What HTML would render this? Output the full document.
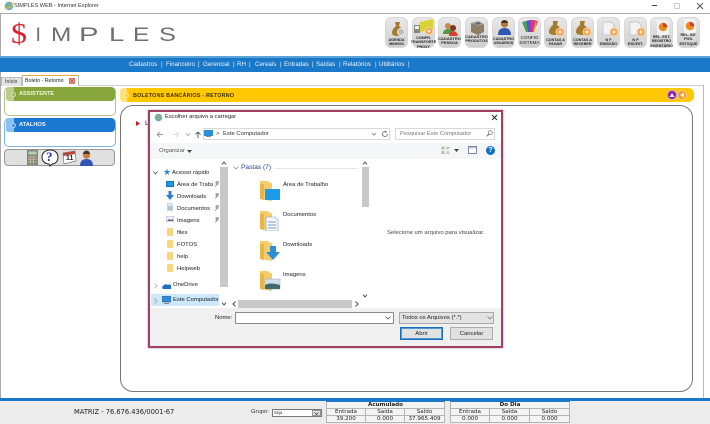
<!DOCTYPE html>
<html><head><meta charset="utf-8">
<style>
html,body{margin:0;padding:0;background:#fff}
body{width:710px;height:424px;position:relative;overflow:hidden;font-family:"Liberation Sans",sans-serif;color:#222;filter:blur(.3px)}
div,span,svg{position:absolute;box-sizing:border-box}
.t{white-space:nowrap}
.b{width:23px;height:31px;top:17px;border-radius:6px;background:linear-gradient(#e8e8e8,#cfcfcf);border:1px solid #d8d8d8}
.l{left:-3px;width:27px;text-align:center;font-size:3.7px;line-height:4.3px;font-weight:bold;color:#222}
.nm{font-size:5.9px;color:#222;white-space:nowrap}
.c{border:1px solid #b4b4b4;background:#f4f4f4;text-align:center;font-size:5.6px;line-height:7px;font-family:"DejaVu Sans",sans-serif;color:#222;white-space:nowrap}
.n{top:60px;font-size:6.2px;line-height:9px;color:#eef5fc;white-space:nowrap}
.g{top:25px;font-size:19.5px;line-height:20px;color:#6f6f6f;transform-origin:left;white-space:nowrap}
.f{width:6px;height:8px;left:167px;background:#f7d67c;border-radius:1px}
</style></head>
<body>
<!-- title bar -->
<svg style="left:4px;top:1px" width="10" height="10" viewBox="0 0 10 10"><circle cx="5" cy="5" r="4.2" fill="#5da7d8"/><path d="M1 5Q5 1 9 4M2 7Q5 4 8 7" stroke="#9ab95a" stroke-width="1.3" fill="none"/><path d="M0 7Q6 9 10 1" stroke="#e8c24d" stroke-width=".8" fill="none"/></svg>
<div class="t" style="left:14px;top:2px;font-size:5.6px;color:#333;line-height:9px">SIMPLES WEB - Internet Explorer</div>
<div style="left:652px;top:5px;width:5px;height:1px;background:#444"></div>
<div style="left:674px;top:3px;width:6px;height:6px;border:1px solid #ccc"></div>
<svg style="left:696px;top:2px" width="8" height="8"><path d="M1 1L7 7M7 1L1 7" stroke="#555" stroke-width="1"/></svg>
<div style="left:0;top:13px;width:710px;height:1px;background:#a8a8a8"></div>
<div style="left:0;top:14px;width:1px;height:384px;background:#aaa"></div>
<!-- logo -->
<div class="t" style="left:11px;top:15px;font-family:'Liberation Serif',serif;font-size:29px;line-height:38px;color:#e01f26;transform:scaleX(1.1);transform-origin:left">$</div>
<div class="g" style="left:35.500px">I</div>
<div class="g" style="left:51px;transform:scaleX(1.25)">M</div>
<div class="g" style="left:79px;transform:scaleX(1.5)">P</div>
<div class="g" style="left:108.500px;transform:scaleX(1.4)">L</div>
<div class="g" style="left:132.500px;transform:scaleX(1.25)">E</div>
<div class="g" style="left:158.500px;transform:scaleX(1.3)">S</div>
<!-- toolbar buttons -->
<div class="b" style="left:385px"><svg style="left:4px;top:3px" width="15" height="16"><path d="M5 1h5l-1 4q5 3 4 8q-1 2-5 2q-6 0-6-3q0-4 4-7z" fill="#a67c2c"/><circle cx="11" cy="11" r="3.5" fill="#bbb" stroke="#eee"/></svg><div class="l" style="top:20px">AGENDA<br>MINHOS</div></div>
<div class="b" style="left:412px"><svg style="left:0;top:1px" width="22" height="18"><path d="M7 3L20 0V11L7 13z" fill="#d9d232"/><path d="M1 6h6v8H1z" fill="#888"/><path d="M2 7h4v3H2z" fill="#eee"/><circle cx="16" cy="12" r="3.6" fill="#f0973a" stroke="#f7d5a8"/><path d="M16 10v4M14 12h4" stroke="#fff"/></svg><div class="l" style="top:18px">COMPR.<br>TRANSPORTE<br>PROXY</div></div>
<div class="b" style="left:438px"><svg style="left:3px;top:4px" width="17" height="14"><circle cx="6" cy="4" r="3" fill="#c68a4f"/><path d="M1 12q0-5 5-5t5 5z" fill="#4d9a3e"/><circle cx="11" cy="6" r="3" fill="#7a3a1a"/><path d="M7 14q0-5 4-5t5 5z" fill="#d9412f"/></svg><div class="l" style="top:19px;font-size:4px">CADASTRO<br>PESSOA</div></div>
<div class="b" style="left:465px"><svg style="left:4px;top:2px" width="15" height="15"><path d="M1 3l7-2 6 3v8l-6 3-7-3z" fill="#8e7c63"/><path d="M1 3l7 3 6-2-6-3z" fill="#b7a88e"/><path d="M5 3l5-1 1 2-5 1z" fill="#4b6a9c"/></svg><div class="l" style="top:17px;font-size:4px">CADASTRO<br>PRODUTOS</div></div>
<div class="b" style="left:492px"><svg style="left:5px;top:2px" width="13" height="15"><circle cx="6.500" cy="4" r="3.500" fill="#b87333"/><path d="M3 3a3.500 3 0 0 1 7 0z" fill="#4b3423"/><path d="M0 15q0-7 6.500-7T13 15z" fill="#2f56b5"/></svg><div class="l" style="top:19px">CADASTRO<br>USUÁRIOS</div></div>
<div class="b" style="left:518px"><svg style="left:2px;top:1px" width="19" height="16"><path d="M1 3L5 13h2L5 2z" fill="#4aa34a"/><path d="M5 2l2 11h2L9 1z" fill="#3e5fd0"/><path d="M9 1v12h2l1-12z" fill="#c02fb0"/><path d="M12 1l-1 12h2l4-11z" fill="#e03a5c"/><path d="M15 3l-2 10" stroke="#eecc44" stroke-width="1"/></svg><div class="l" style="top:17px;font-size:4.600px;line-height:5.400px;font-weight:normal">CONFIG<br>SISTEMA</div></div>
<div class="b" style="left:544px"><svg style="left:3px;top:2px" width="17" height="17"><path d="M5 1h5l-1 4q5 3 4 8q-1 2-5 2q-7 0-7-3q0-4 4-7z" fill="#a67c2c"/><circle cx="12" cy="12" r="4" fill="#f0973a" stroke="#f7d5a8"/><path d="M12 9.500v5M9.500 12h5" stroke="#fff"/></svg><div class="l" style="top:20px">CONTAS A<br>PAGAR</div></div>
<div class="b" style="left:571px"><svg style="left:3px;top:2px" width="17" height="17"><path d="M5 1h5l-1 4q5 3 4 8q-1 2-5 2q-7 0-7-3q0-4 4-7z" fill="#a67c2c"/><circle cx="12" cy="12" r="4" fill="#f0973a" stroke="#f7d5a8"/><path d="M12 9.500v5M9.500 12h5" stroke="#fff"/></svg><div class="l" style="top:20px">CONTAS A<br>RECEBER</div></div>
<div class="b" style="left:597px"><svg style="left:4px;top:3px" width="17" height="16"><path d="M1 1h8l3 3v10H1z" fill="#f4f4f4" stroke="#bbb" stroke-width=".7"/><circle cx="12" cy="11" r="4" fill="#f0973a" stroke="#f7d5a8"/><path d="M12 8.500v5M9.500 11h5" stroke="#fff"/></svg><div class="l" style="top:20px">N F<br>EMISSÃO</div></div>
<div class="b" style="left:624px"><svg style="left:4px;top:3px" width="17" height="16"><path d="M1 1h8l3 3v10H1z" fill="#f4f4f4" stroke="#bbb" stroke-width=".7"/><circle cx="12" cy="11" r="4" fill="#f0973a" stroke="#f7d5a8"/><path d="M12 8.500v5M9.500 11h5" stroke="#fff"/></svg><div class="l" style="top:20px;font-size:4px">N F<br>ESCRIT.</div></div>
<div class="b" style="left:650px"><svg style="left:5px;top:2px" width="14" height="15"><path d="M1 0h9l3 3v12H1z" fill="#f2f2f2"/><circle cx="7" cy="7" r="4.200" fill="#ea8a1e"/><path d="M7 7V2.800A4.200 4.200 0 0 1 11.200 7z" fill="#d83a22"/></svg><div class="l" style="top:17px">REL. EST.<br>REGISTRO<br>INVENTÁRIO</div></div>
<div class="b" style="left:677px"><svg style="left:5px;top:1px" width="14" height="15"><path d="M1 0h9l3 3v12H1z" fill="#f2f2f2"/><circle cx="7" cy="7" r="4.200" fill="#ea8a1e"/><path d="M7 7V2.800A4.200 4.200 0 0 1 11.200 7z" fill="#d83a22"/></svg><div class="l" style="top:15px">REL. INT.<br>POS.<br>ESTOQUE</div></div>
<!-- blue nav -->
<div style="left:0;top:56px;width:710px;height:16px;background:linear-gradient(#5ba3d8 0,#5ba3d8 2px,#1a78c8 2px,#1a78c8 100%)"></div>
<div class="n" style="left:129px">Cadastros</div><div class="n" style="left:161px">|</div>
<div class="n" style="left:166px">Financeiro</div><div class="n" style="left:198px">|</div>
<div class="n" style="left:203px">Gerencial</div><div class="n" style="left:233px">|</div>
<div class="n" style="left:237px">RH</div><div class="n" style="left:249px">|</div>
<div class="n" style="left:255px">Cereais</div><div class="n" style="left:280px">|</div>
<div class="n" style="left:284px">Entradas</div><div class="n" style="left:312px">|</div>
<div class="n" style="left:316px">Saídas</div><div class="n" style="left:339px">|</div>
<div class="n" style="left:343px">Relatórios</div><div class="n" style="left:375px">|</div>
<div class="n" style="left:379px">Utilitários</div><div class="n" style="left:408px">|</div>
<!-- tabs -->
<div style="left:1px;top:77px;width:21px;height:9px;background:#e4e4e4;border:1px solid #bbb;border-bottom:0"></div>
<div class="t" style="left:5px;top:78px;font-size:5.200px;line-height:8px;color:#333">Início</div>
<div style="left:22px;top:75px;width:57px;height:11px;background:#fff;border:1px solid #bbb;border-top:1px solid #e6a93a;border-bottom:0"></div>
<div class="t" style="left:25px;top:76.500px;font-size:5.300px;line-height:8px;color:#222">Boleto - Retorno</div>
<div style="left:69px;top:78px;width:6px;height:6px;background:#eebbaa;border:1px solid #d07a60"></div>
<svg style="left:70px;top:79px" width="4" height="4"><path d="M0 0L4 4M4 0L0 4" stroke="#c44" stroke-width=".9"/></svg>
<div style="left:79px;top:85px;width:625px;height:1px;background:#cfcfcf"></div>
<!-- left panels -->
<div style="left:4px;top:87px;width:112px;height:29px;border:1px solid #b3c08e;border-radius:5px;background:#fff"></div>
<div style="left:6px;top:87px;width:109px;height:14px;background:#86a63c;border-radius:3px 4px 4px 3px"></div>
<div style="left:6px;top:87px;width:8px;height:14px;background:#bccb8e;border-radius:3px 0 0 3px"></div>
<div style="left:11px;top:92px;width:5px;height:5px;border-radius:50%;border:1px solid #d7e0b6;background:#9db561"></div>
<div class="t" style="left:19px;top:90px;font-size:5.600px;font-weight:bold;line-height:8px;color:#f1f4e2">ASSISTENTE</div>
<div style="left:4px;top:118px;width:112px;height:29px;border:1px solid #7fb4e2;border-radius:5px;background:#fff"></div>
<div style="left:6px;top:118px;width:109px;height:14px;background:#1a78d0;border-radius:3px 4px 4px 3px"></div>
<div style="left:6px;top:118px;width:8px;height:14px;background:#8cc0ee;border-radius:3px 0 0 3px"></div>
<div style="left:11px;top:123px;width:5px;height:5px;border-radius:50%;border:1px solid #b7d6f2;background:#3f90d8"></div>
<div class="t" style="left:19px;top:121px;font-size:5.700px;font-weight:bold;line-height:8px;color:#eaf3fb">ATALHOS</div>
<div style="left:4px;top:149px;width:111px;height:17px;background:#e0e0e0;border:1px solid #999;border-radius:4px"></div>
<svg style="left:27px;top:150px" width="11" height="15"><rect width="11" height="15" fill="#7c8a76"/><rect x="1.500" y="1.500" width="8" height="3" fill="#b9d0b4"/><path d="M1 7h9M1 9.500h9M1 12h9M3.500 6v8M6.500 6v8" stroke="#d8b8a0" stroke-width=".8"/></svg>
<svg style="left:41px;top:149px" width="18" height="18"><path d="M9 1c4.500 0 8 2.500 8 7s-3 7-6 7l-2 2-1-2c-4 0-7-3-7-7s3.500-7 8-7z" fill="#fff" stroke="#222" stroke-width="1"/></svg>
<div class="t" style="left:46px;top:150px;font-family:'Liberation Serif',serif;font-size:13px;font-weight:bold;line-height:14px;color:#1c2ea8">?</div>
<svg style="left:62px;top:150px" width="15" height="15"><path d="M1 3l12-2 1 10-12 3z" fill="#fff" stroke="#777" stroke-width=".7"/><path d="M1 3l12-2 .4 3-12 2z" fill="#b84a3c"/></svg>
<div class="t" style="left:66px;top:155px;font-size:7px;font-weight:bold;line-height:8px;color:#222">11</div>
<svg style="left:80px;top:150px" width="13" height="16"><circle cx="6.500" cy="5" r="3.700" fill="#c8803c"/><path d="M3 4a3.500 3.500 0 0 1 7 0z" fill="#4b3423"/><path d="M0 16q0-7 6.500-7T13 16z" fill="#2f56b5"/></svg>
<!-- main panel -->
<div style="left:703px;top:85px;width:1px;height:313px;background:#bbb"></div>
<div style="left:120px;top:88px;width:574px;height:14px;background:#ffc800;border-radius:4px 6px 6px 4px"></div>
<div style="left:120px;top:88px;width:7px;height:14px;background:#ffe27a;border-radius:4px 0 0 4px"></div>
<div style="left:124px;top:93px;width:5px;height:5px;border-radius:50%;border:1px solid #ffe98f;background:#ffd030"></div>
<div class="t" style="left:133px;top:92px;font-size:5.400px;font-weight:bold;line-height:8px;color:#3c3000;letter-spacing:.2px">BOLETONS BANCÁRIOS - RETORNO</div>
<div style="left:667px;top:90px;width:10px;height:10px;border-radius:50%;background:#8a1fa8;border:1px solid #c9a4d8"></div>
<svg style="left:669px;top:92px" width="6" height="6"><path d="M3 1L5.500 5H.5z" fill="#fff"/></svg>
<div style="left:677px;top:90px;width:10px;height:10px;border-radius:50%;background:#ef9a32;border:1px solid #f4c88e"></div>
<svg style="left:679px;top:92px" width="6" height="6"><path d="M1 3L5 .5V5.500z" fill="#fff"/></svg>
<div style="left:120px;top:105px;width:573px;height:287px;border:1px solid #777;border-radius:13px;background:#fff"></div>
<svg style="left:136px;top:121px" width="4" height="5"><path d="M0 0L4 2.500 0 5z" fill="#d01818"/></svg>
<div class="t" style="left:145px;top:119px;font-size:6.600px;line-height:9px;color:#222">L</div>
<!-- dialog -->
<div style="left:148px;top:110px;width:355px;height:238px;background:#fff;border:2px solid #a23f66;box-shadow:0 0 2px rgba(0,0,0,.4)"></div>
<svg style="left:154px;top:113px" width="9" height="9" viewBox="0 0 10 10"><circle cx="5" cy="5" r="4.200" fill="#5da7d8"/><path d="M1 5Q5 1 9 4M2 7Q5 4 8 7" stroke="#9ab95a" stroke-width="1.300" fill="none"/></svg>
<div class="t" style="left:165px;top:113px;font-size:5.800px;line-height:9px;color:#222">Escolher arquivo a carregar</div>
<svg style="left:491px;top:114px" width="7" height="7"><path d="M1 1L6 6M6 1L1 6" stroke="#222" stroke-width=".9"/></svg>
<!-- nav row -->
<svg style="left:155px;top:130px" width="48" height="9"><path d="M2 4.500h6M2 4.500L5 2M2 4.500L5 7" stroke="#999" fill="none" stroke-width=".9"/><path d="M24 4.500h-6M24 4.500L21 2M24 4.500L21 7" stroke="#ddd" fill="none" stroke-width=".9"/><path d="M31 3.500L33 5.500 35 3.500" stroke="#999" fill="none" stroke-width=".8"/><path d="M43 8V2M43 2L40.500 4.500M43 2L45.500 4.500" stroke="#555" fill="none" stroke-width=".9"/></svg>
<div style="left:203px;top:128px;width:187px;height:12px;border:1px solid #d9d9d9;background:#fff"></div>
<svg style="left:204px;top:130px" width="10" height="8"><rect width="9" height="6" fill="#2b8ed8"/><rect x="2" y="6" width="5" height="1" fill="#888"/></svg>
<div class="t" style="left:216px;top:130px;font-size:5.900px;line-height:8px;color:#333">&gt;</div>
<div class="t" style="left:223px;top:130px;font-size:5.900px;line-height:8px;color:#333">Este Computador</div>
<svg style="left:371px;top:132px" width="6" height="5"><path d="M1 1L3 3 5 1" stroke="#777" fill="none" stroke-width=".8"/></svg>
<svg style="left:381px;top:130px" width="8" height="8"><path d="M6.500 4A2.500 2.500 0 1 1 5 1.700" stroke="#666" fill="none" stroke-width=".8"/><path d="M4 .5L6 1.700 4.500 3.200" fill="#666"/></svg>
<div style="left:395px;top:128px;width:100px;height:12px;border:1px solid #d9d9d9;background:#fff"></div>
<div class="t" style="left:400px;top:130px;font-size:5.700px;line-height:8px;color:#777">Pesquisar Este Computador</div>
<svg style="left:486px;top:130px" width="7" height="7"><circle cx="4.300" cy="2.700" r="2" stroke="#666" fill="none" stroke-width=".7"/><path d="M3 4L.8 6.300" stroke="#666"/></svg>
<!-- toolbar -->
<div style="left:150px;top:143px;width:351px;height:16px;background:#f5f6f7"></div>
<div class="nm" style="left:159px;top:147px;line-height:8px;color:#555">Organizar</div>
<svg style="left:187px;top:150px" width="5" height="3"><path d="M0 0h5L2.500 3z" fill="#444"/></svg>
<svg style="left:441px;top:146px" width="9" height="9"><rect x=".5" y=".5" width="3" height="3" fill="#a8c8a0"/><rect x=".5" y="5" width="3" height="3" fill="#c8b8a0"/><path d="M5 1.500h4M5 3h3M5 6h4M5 7.500h3" stroke="#aaa" stroke-width=".7"/></svg>
<svg style="left:454px;top:149px" width="5" height="3"><path d="M0 0h5L2.500 3z" fill="#444"/></svg>
<svg style="left:468px;top:146px" width="9" height="8"><rect x=".5" y=".5" width="8" height="7" fill="#fff" stroke="#7a8a9a"/><rect x="1" y="1" width="7" height="1.500" fill="#bcd"/></svg>
<div class="t" style="left:486px;top:146px;width:9px;height:9px;border-radius:50%;background:#1270c4;color:#fff;font-size:7px;font-weight:bold;line-height:9px;text-align:center">?</div>
<!-- nav tree -->
<div style="left:220px;top:167px;width:8px;height:120px;background:#c8c8c8"></div>
<svg style="left:221px;top:161px" width="6" height="4"><path d="M1 3.500L3 1 5 3.500" stroke="#444" fill="none" stroke-width=".9"/></svg>
<svg style="left:221px;top:302px" width="6" height="4"><path d="M1 .5L3 3 5 .5" stroke="#444" fill="none" stroke-width=".9"/></svg>
<svg style="left:153px;top:171px" width="5" height="4"><path d="M.5 .5L2.500 3 4.500 .5" stroke="#555" fill="none" stroke-width=".8"/></svg>
<div class="t" style="left:163px;top:167px;font-size:9px;line-height:10px;color:#2f7fd0">★</div>
<div class="nm" style="left:172px;top:168.500px;line-height:8px">Acesso rápido</div>
<div style="left:166px;top:181px;width:8px;height:6px;background:#1c9ce8;border:1px solid #1570b0"></div>
<div class="nm" style="left:177px;top:180.500px;line-height:8px;width:36px;overflow:hidden">Área de Trabz</div>
<svg style="left:166px;top:191px" width="8" height="9"><path d="M2.500 0h3v4H8L4 9 0 4h2.500z" fill="#2b7fd6"/></svg>
<div class="nm" style="left:177px;top:192.500px;line-height:8px">Downloads</div>
<svg style="left:167px;top:203px" width="6" height="8"><path d="M0 0h4l2 2v6H0z" fill="#dfe8f2" stroke="#8aa" stroke-width=".5"/><path d="M1 4h4M1 6h4" stroke="#58a" stroke-width=".7"/></svg>
<div class="nm" style="left:177px;top:204.500px;line-height:8px">Documentos</div>
<svg style="left:166px;top:216px" width="8" height="6"><rect width="8" height="6" fill="#eef" stroke="#889" stroke-width=".5"/><path d="M1 5l2-2 2 1 2-1v2z" fill="#567"/></svg>
<div class="nm" style="left:177px;top:216.500px;line-height:8px">Imagens</div>
<svg style="left:214px;top:181px" width="5" height="6"><path d="M2 0.500h2.500L4 3.500h-2zM3 3.500L1 5.800" stroke="#888" fill="#aaa" stroke-width=".6"/></svg>
<svg style="left:214px;top:193px" width="5" height="6"><path d="M2 0.500h2.500L4 3.500h-2zM3 3.500L1 5.800" stroke="#888" fill="#aaa" stroke-width=".6"/></svg>
<svg style="left:214px;top:205px" width="5" height="6"><path d="M2 0.500h2.500L4 3.500h-2zM3 3.500L1 5.800" stroke="#888" fill="#aaa" stroke-width=".6"/></svg>
<svg style="left:214px;top:217px" width="5" height="6"><path d="M2 0.500h2.500L4 3.500h-2zM3 3.500L1 5.800" stroke="#888" fill="#aaa" stroke-width=".6"/></svg>
<div class="f" style="top:228px"></div>
<div class="nm" style="left:177px;top:228.500px;line-height:8px">files</div>
<div class="f" style="top:240px"></div>
<div class="nm" style="left:177px;top:240.500px;line-height:8px">FOTOS</div>
<div class="f" style="top:252px"></div>
<div class="nm" style="left:177px;top:252.500px;line-height:8px">help</div>
<div class="f" style="top:264px"></div>
<div class="nm" style="left:177px;top:264.500px;line-height:8px">Helpweb</div>
<svg style="left:154px;top:283px" width="4" height="6"><path d="M.5 .5L3 3 .5 5.500" stroke="#aaa" fill="none" stroke-width=".8"/></svg>
<svg style="left:162px;top:283px" width="9" height="6"><path d="M1 6a2 2 0 0 1 .5-3.500A3 3 0 0 1 6 2a2 2 0 0 1 3 4z" fill="#1c6fc4"/></svg>
<div class="nm" style="left:173px;top:280.500px;line-height:8px">OneDrive</div>
<div style="left:151px;top:294px;width:68px;height:12px;background:#cce8fb"></div>
<svg style="left:154px;top:298px" width="4" height="6"><path d="M.5 .5L3 3 .5 5.500" stroke="#999" fill="none" stroke-width=".8"/></svg>
<svg style="left:162px;top:296px" width="9" height="9"><rect width="9" height="6" fill="#2b8ed8" stroke="#446" stroke-width=".5"/><rect x="2" y="7" width="5" height="1" fill="#888"/></svg>
<div class="nm" style="left:173px;top:296px;line-height:8px">Este Computador</div>
<!-- content -->
<svg style="left:233px;top:166px" width="6" height="4"><path d="M.5 .5L3 3 5.500 .5" stroke="#99a" fill="none" stroke-width=".8"/></svg>
<div class="t" style="left:241px;top:163px;font-size:6.600px;line-height:10px;color:#1e3f8f">Pastas (7)</div>
<div style="left:274px;top:168px;width:84px;height:1px;background:#e3e6ec"></div>
<svg style="left:260px;top:180px" width="21" height="21"><path d="M0 1h8l2 2h2v18L0 19z" fill="#f4cd6a"/><path d="M0 4L4 4V20L0 19z" fill="#e7b64a"/><rect x="5" y="9" width="15" height="11" fill="#1c9ce8"/></svg>
<div class="nm" style="left:283px;top:181px;line-height:8px">Área de Trabalho</div>
<svg style="left:260px;top:210px" width="21" height="21"><path d="M0 1h8l2 2h2v18L0 19z" fill="#f4cd6a"/><path d="M0 4L4 4V20L0 19z" fill="#e7b64a"/><path d="M6 7h9l3 3v11H6z" fill="#f3f6fa" stroke="#8a9cac" stroke-width=".6"/><path d="M8 12h8M8 15h8M8 18h8" stroke="#5888b8" stroke-width=".8"/></svg>
<div class="nm" style="left:283px;top:211px;line-height:8px">Documentos</div>
<svg style="left:260px;top:240px" width="21" height="21"><path d="M0 1h8l2 2h2v18L0 19z" fill="#f4cd6a"/><path d="M0 4L4 4V20L0 19z" fill="#e7b64a"/><path d="M10 6h6v6h4l-7 8-7-8h4z" fill="#2b8ed8"/></svg>
<div class="nm" style="left:283px;top:241px;line-height:8px">Downloads</div>
<svg style="left:260px;top:270px" width="21" height="21"><path d="M0 1h8l2 2h2v18L0 19z" fill="#f4cd6a"/><path d="M0 4L4 4V20L0 19z" fill="#e7b64a"/><rect x="5" y="9" width="15" height="10" fill="#cfe0ee" stroke="#9ab" stroke-width=".5"/><path d="M5 15q5-3 15 0v4H5z" fill="#3f6b6a"/></svg>
<div class="nm" style="left:283px;top:271px;line-height:8px">Imagens</div>
<!-- content scrollbars -->
<div style="left:362px;top:167px;width:7px;height:40px;background:#c8c8c8"></div>
<svg style="left:362px;top:161px" width="6" height="4"><path d="M1 3.500L3 1 5 3.500" stroke="#444" fill="none" stroke-width=".9"/></svg>
<svg style="left:362px;top:294px" width="6" height="4"><path d="M1 .5L3 3 5 .5" stroke="#444" fill="none" stroke-width=".9"/></svg>
<div style="left:238px;top:300px;width:114px;height:8px;background:#c9c9c9"></div>
<svg style="left:232px;top:301px" width="4" height="6"><path d="M3.500 .5L1 3 3.500 5.500" stroke="#444" fill="none" stroke-width=".9"/></svg>
<svg style="left:355px;top:301px" width="4" height="6"><path d="M.5 .5L3 3 .5 5.500" stroke="#444" fill="none" stroke-width=".9"/></svg>
<div class="t" style="left:387px;top:229px;font-size:5.900px;line-height:8px;color:#444">Selecione um arquivo para visualizar.</div>
<!-- bottom -->
<div style="left:150px;top:308px;width:351px;height:38px;background:#f0f0f0"></div>
<div class="nm" style="left:215px;top:314px;line-height:8px">Nome:</div>
<div style="left:235px;top:312px;width:159px;height:12px;background:#fff;border:1px solid #8a8a8a;border-radius:1px"></div>
<svg style="left:385px;top:316px" width="6" height="4"><path d="M.5 .5L3 3 5.500 .5" stroke="#555" fill="none" stroke-width=".8"/></svg>
<div style="left:399px;top:312px;width:95px;height:12px;background:#e3e3e3;border:1px solid #ababab"></div>
<div class="nm" style="left:402px;top:314px;line-height:8px">Todos os Arquivos (*.*)</div>
<svg style="left:487px;top:316px" width="6" height="4"><path d="M.5 .5L3 3 5.500 .5" stroke="#777" fill="none" stroke-width=".8"/></svg>
<div style="left:400px;top:327px;width:43px;height:13px;background:#e1e1e1;border:1px solid #1b6fb8;box-shadow:inset 0 0 0 1px #4c9ad8"></div>
<div class="nm" style="left:400px;top:329.500px;width:43px;text-align:center;line-height:8px">Abrir</div>
<div style="left:450px;top:327px;width:43px;height:13px;background:#e1e1e1;border:1px solid #adadad"></div>
<div class="nm" style="left:450px;top:329.500px;width:43px;text-align:center;line-height:8px">Cancelar</div>
<!-- footer -->
<div style="left:0;top:398px;width:710px;height:3px;background:#1a78c8"></div>
<div style="left:0;top:401px;width:710px;height:23px;background:#ececec"></div>
<div class="t" style="left:74px;top:408px;font-family:'DejaVu Sans',sans-serif;font-size:6.700px;line-height:9px;color:#222">MATRIZ - 76.676.436/0001-67</div>
<div class="t" style="left:251px;top:408px;font-size:5.800px;line-height:8px;color:#333">Grupo:</div>
<div style="left:272px;top:409px;width:50px;height:8px;background:#fff;border:1px solid #777"></div>
<div class="t" style="left:274px;top:410px;font-size:4.200px;line-height:6px;color:#333">Seja</div>
<div style="left:312px;top:410px;width:9px;height:6px;background:#e6e6e6;border:1px solid #999"></div>
<svg style="left:314px;top:412px" width="5" height="3"><path d="M.5 .5L2.500 2.500 4.500 .5" stroke="#333" fill="none" stroke-width=".8"/></svg>
<div class="c" style="left:326px;top:401px;width:119px;height:8px;font-weight:bold;border-top-color:#1a78c8">Acumulado</div>
<div class="c" style="left:326px;top:408px;width:40px;height:8px">Entrada</div>
<div class="c" style="left:365px;top:408px;width:40px;height:8px">Saída</div>
<div class="c" style="left:404px;top:408px;width:41px;height:8px">Saldo</div>
<div class="c" style="left:326px;top:415px;width:40px;height:8px">39.200</div>
<div class="c" style="left:365px;top:415px;width:40px;height:8px">0.000</div>
<div class="c" style="left:404px;top:415px;width:41px;height:8px">37.965.409</div>
<div class="c" style="left:450px;top:401px;width:120px;height:8px;font-weight:bold;border-top-color:#1a78c8">Do Dia</div>
<div class="c" style="left:450px;top:408px;width:40px;height:8px">Entrada</div>
<div class="c" style="left:489px;top:408px;width:41px;height:8px">Saída</div>
<div class="c" style="left:529px;top:408px;width:41px;height:8px">Saldo</div>
<div class="c" style="left:450px;top:415px;width:40px;height:8px">0.000</div>
<div class="c" style="left:489px;top:415px;width:41px;height:8px">0.000</div>
<div class="c" style="left:529px;top:415px;width:41px;height:8px">0.000</div>
</body></html>
